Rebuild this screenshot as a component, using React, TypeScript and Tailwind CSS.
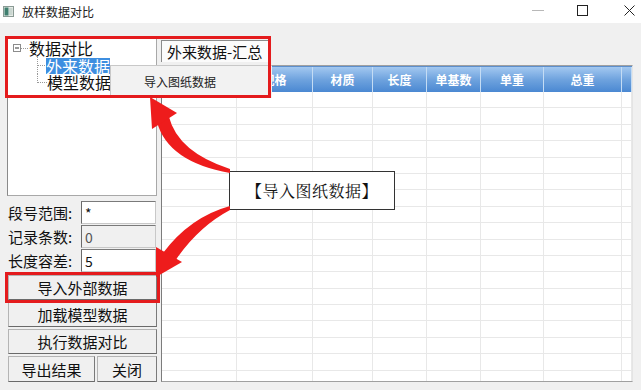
import React from "react";

const headers = ["序号", "规格", "材质", "长度", "单基数", "单重", "总重", ""];
const gridCols = "grid grid-cols-[75px_76px_60px_54px_54px_63px_78px_10px]";

function Btn({ children, className = "" }: { children: React.ReactNode; className?: string }) {
  return (
    <div
      className={`flex items-center justify-center h-[25px] bg-[#f0f0f0] border border-[#b4b4b4] border-b-[#6a6a6a] border-r-[#7a7a7a] text-[15px] leading-none text-[#111] ${className}`}
    >
      {children}
    </div>
  );
}

function Field({ label, value, disabled }: { label: string; value: string; disabled?: boolean }) {
  return (
    <div className="flex items-center h-[23px]">
      <div className="w-[74px] pl-[1px] text-[15px] leading-none text-[#111] whitespace-nowrap">{label}</div>
      <div
        className={`w-[75px] h-[23px] flex items-center pl-[3px] text-[14px] leading-none border border-[#c8c8c8] border-t-[#7a7a7a] border-l-[#6a6a6a] ${
          disabled ? "bg-[#f0f0f0] text-[#555]" : "bg-white text-[#111]"
        }`}
      >
        {value}
      </div>
    </div>
  );
}

export default function App() {
  const rows = Array.from({ length: 18 });
  return (
    <div className="relative w-[641px] h-[390px] overflow-hidden bg-[#f0f0f0] font-['Noto_Sans_CJK_SC','Noto_Sans',sans-serif] text-[#111]">
      {/* title bar */}
      <div className="h-[23px] bg-white flex items-center">
        <svg width="11" height="11" viewBox="0 0 11 11" className="ml-[3px]">
          <rect x="0.5" y="0.5" width="10" height="10" fill="#e8ece8" stroke="#8a9a94" />
          <rect x="1.5" y="1.5" width="4" height="8" fill="#3f7f6f" />
          <rect x="6" y="2" width="3.5" height="7" fill="#c9d6d0" />
        </svg>
        <div className="ml-[8px] text-[12px] leading-none text-[#222]">放样数据对比</div>
        <div className="ml-auto flex items-center pb-[2px]">
          <svg width="12" height="11" viewBox="0 0 12 11">
            <line x1="0" y1="5.5" x2="12" y2="5.5" stroke="#b8b8b8" strokeWidth="1" />
          </svg>
          <svg width="11" height="11" viewBox="0 0 11 11" className="ml-[33px]">
            <rect x="0.5" y="0.5" width="10" height="10" fill="none" stroke="#222" strokeWidth="1" />
          </svg>
          <svg width="11" height="11" viewBox="0 0 11 11" className="ml-[36px] mr-[6px]">
            <path d="M0.5 0.5 L10.5 10.5 M10.5 0.5 L0.5 10.5" stroke="#222" strokeWidth="1" />
          </svg>
        </div>
      </div>

      {/* body */}
      <div className="flex">
        {/* left panel */}
        <div className="w-[161px] flex flex-col pl-[7px] pt-[15px]">
          <div className="w-[150px] h-[158px] bg-white border border-[#a8a8a8] border-l-[#8a8a8a] pt-[1px]">
            <div className="flex items-center h-[17px]">
              <svg width="21" height="17" viewBox="0 0 21 17">
                <rect x="5.5" y="4.5" width="7" height="7" fill="white" stroke="#8c8c8c" />
                <line x1="7" y1="8" x2="11" y2="8" stroke="#333" />
                <line x1="13" y1="8.5" x2="20" y2="8.5" stroke="#999" strokeDasharray="1 1" />
              </svg>
              <span className="text-[16px] leading-[17px]">数据对比</span>
            </div>
            <div className="flex items-center h-[17px]">
              <svg width="38" height="17" viewBox="0 0 38 17">
                <line x1="29.5" y1="0" x2="29.5" y2="17" stroke="#999" strokeDasharray="1 1" />
                <line x1="30" y1="8.5" x2="38" y2="8.5" stroke="#999" strokeDasharray="1 1" />
              </svg>
              <span className="text-[16px] leading-[16px] bg-[#3d8ee0] text-white">外来数据</span>
            </div>
            <div className="flex items-center h-[17px]">
              <svg width="39" height="17" viewBox="0 0 39 17">
                <line x1="29.5" y1="0" x2="29.5" y2="9" stroke="#999" strokeDasharray="1 1" />
                <line x1="30" y1="8.5" x2="39" y2="8.5" stroke="#999" strokeDasharray="1 1" />
              </svg>
              <span className="text-[16px] leading-[17px]">模型数据</span>
            </div>
          </div>

          <div className="mt-[5px] flex flex-col gap-[1px]">
            <Field label="段号范围:" value="*" />
            <Field label="记录条数:" value="0" disabled />
            <Field label="长度容差:" value="5" />
          </div>

          <div className="mt-[3px] flex flex-col gap-[2px] pl-[1px] w-[150px]">
            <Btn>导入外部数据</Btn>
            <Btn>加载模型数据</Btn>
            <Btn>执行数据对比</Btn>
            <div className="flex gap-[2px]">
              <Btn className="w-[87px] h-[26px]">导出结果</Btn>
              <Btn className="w-[60px] h-[26px]">关闭</Btn>
            </div>
          </div>
        </div>

        {/* right panel */}
        <div className="flex flex-col pt-[17px]">
          <div className="w-[110px] h-[22px] bg-[#fbfbfb] border-l border-t border-[#8c8c8c] flex items-center pl-[5px] overflow-hidden whitespace-nowrap text-[15px] leading-none">
            外来数据-汇总
          </div>
          <div className="mt-[3px] w-[472px] h-[317px] bg-white border border-[#a0a0a0] border-l-[#7c7c7c] border-r-[#e4e4e4] overflow-hidden">
            <div className={`${gridCols} h-[26px] bg-gradient-to-b from-[#a3c8f0] via-[#6fa3de] to-[#4a88d2] border-t border-[#5d8fcc]`}>
              {headers.map((h, i) => (
                <div
                  key={i}
                  className="flex items-center justify-center text-[12px] font-bold text-white leading-none border-r border-[#c4dcf4]"
                >
                  {h}
                </div>
              ))}
            </div>
            {rows.map((_, r) => (
              <div key={r} className={`${gridCols} h-[16.4px]`}>
                {headers.map((_, i) => (
                  <div key={i} className="border-r border-b border-[#e8e8e8]" />
                ))}
              </div>
            ))}
          </div>
        </div>
      </div>

      {/* context menu */}
      <div className="absolute left-[110px] top-[65px] w-[162px] h-[33px] bg-[#f2f2f2] border-l border-t border-[#c8c8c8] flex items-center pl-[33px] text-[12px] leading-none text-[#222]">
        导入图纸数据
      </div>

      {/* red highlight boxes */}
      <div className="absolute left-[5px] top-[36px] w-[266px] h-[62px] border-[3px] border-[#e41b1d]" />
      <div className="absolute left-[5px] top-[272px] w-[155px] h-[31px] border-[3px] border-[#e41b1d]" />

      {/* callout */}
      <div className="absolute left-[229px] top-[171px] w-[166px] h-[39px] bg-white border border-[#333] flex items-center justify-center text-[16px] leading-none tracking-[0.5px] text-[#111] font-['Noto_Serif_CJK_SC','Noto_Sans_CJK_SC',serif]">
        【导入图纸数据】
      </div>

      {/* arrows */}
      <svg className="absolute left-0 top-0 pointer-events-none" width="641" height="390" viewBox="0 0 641 390">
        <path d="M157 122 Q168 162 230 173 L230 169 Q178 152 169 117 Z" fill="#ee1c1c" />
        <path d="M150 97 L152 129 L177 113 Z" fill="#ee1c1c" />
        <path d="M230 206 Q190 217 163 253 L175 261 Q198 227 230 210 Z" fill="#ee1c1c" />
        <path d="M156 277 L156 247 L182 262 Z" fill="#ee1c1c" />
      </svg>
    </div>
  );
}
